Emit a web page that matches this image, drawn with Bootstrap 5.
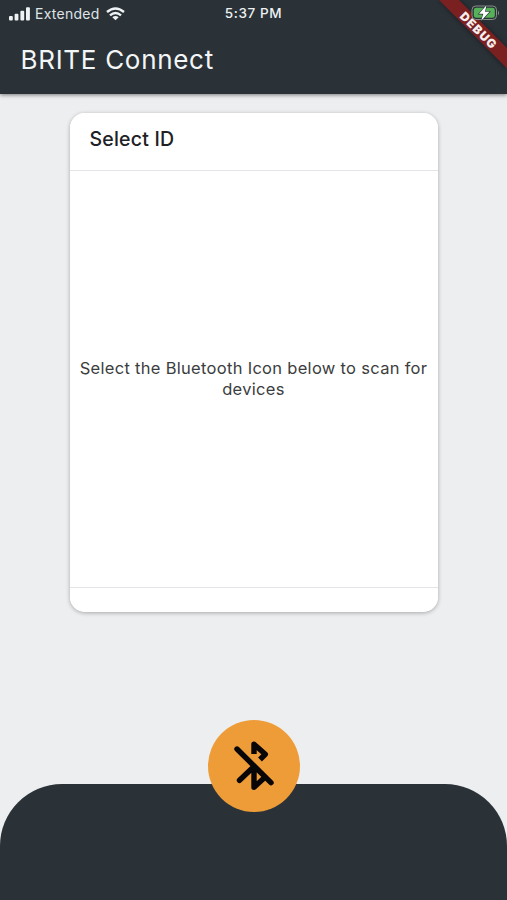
<!DOCTYPE html>
<html lang="en">
<head>
<meta charset="utf-8">
<meta name="viewport" content="width=device-width, initial-scale=1">
<title>BRITE Connect</title>
<link rel="stylesheet" href="https://cdn.jsdelivr.net/npm/bootstrap@5.3.0/dist/css/bootstrap.min.css">
<style>
body{font-family:Inter,"Liberation Sans",sans-serif;background:#eceef0;height:900px}
svg{display:block}
.app-header{height:94px;background:#2a3238;box-shadow:0 1px 4px rgba(0,0,0,.5)}
.status-bar{height:27px;padding:0 9px;color:#dfe4e6;font-size:14px;line-height:27px}
.clock{color:#eef1f2;font-size:13.5px;font-weight:500;letter-spacing:.6px}
.carrier{letter-spacing:.25px;margin:0 6px 0 4px}
.status-side{flex:1 1 0}
.app-title{color:#f3f6f7;font-size:26px;line-height:32px;letter-spacing:.7px;margin:17px 0 0 20.5px;padding:0}
.ribbon{width:80px;height:94px}
.device-card{width:368px;height:499px;margin:19px auto 0;border-radius:15px;box-shadow:0 1px 4px rgba(0,0,0,.3)}
.device-card .card-header{height:58px;padding:0 20px;border-color:#e4e5e8;font-size:19.5px;font-weight:500;color:#202124;line-height:53px;letter-spacing:.2px}
.device-card .card-footer{height:25px;border-color:#e4e5e8;padding:0}
.hint{font-size:16.5px;line-height:21px;color:#3c3d40;letter-spacing:.3px}
.bottom-panel{height:116px;background:#2a3238;border-radius:62px 62px 0 0}
.scan-btn{width:92px;height:92px;background:#ed9c38;margin-top:-64px}
.scan-btn:hover{background:#e39431}
</style>
<script src="https://cdn.jsdelivr.net/npm/bootstrap@5.3.0/dist/js/bootstrap.bundle.min.js"></script>
</head>
<body class="d-flex flex-column overflow-hidden position-relative">
<header class="app-header flex-shrink-0">
  <div class="status-bar d-flex align-items-center">
    <div class="status-side d-flex align-items-center">
      <svg width="22" height="14" viewBox="0 0 22 14" fill="#f0f3f4"><rect x="0" y="9" width="3.8" height="4.5" rx="1"/><rect x="5.6" y="6.8" width="3.8" height="6.700" rx="1"/><rect x="11.4" y="3.800" width="3.8" height="9.700" rx="1"/><rect x="17" y=".3" width="3.9" height="13.2" rx="1"/></svg>
      <span class="carrier">Extended</span>
      <svg width="19" height="14" viewBox="0 0 19 14" fill="none" stroke="#f0f3f4" stroke-width="2.4"><path d="M1 5Q9.500-2 18 5M4 8.300Q9.500 3.700 15 8.300"/><path d="M9.500 13.300 6.300 10.200Q9.500 7.800 12.700 10.200Z" fill="#f0f3f4" stroke="none"/></svg>
    </div>
    <span class="clock">5:37 PM</span>
    <div class="status-side"></div>
  </div>
  <h1 class="app-title fw-normal">BRITE Connect</h1>
</header>
<svg class="ribbon position-absolute top-0 end-0" viewBox="427 0 80 94" role="img" aria-label="Debug, battery charging">
  <defs><filter id="soft" x="-20%" y="-20%" width="140%" height="140%"><feGaussianBlur stdDeviation="2.5"/></filter></defs>
  <path d="M438 0H460L507 47V70Z" fill="#000" opacity=".35" filter="url(#soft)"/>
  <path d="M439 0H459L507 48V68.500Z" fill="#7b2020"/>
  <text transform="translate(478.200 30.200) rotate(45)" text-anchor="middle" y="4.200" font-family="Inter,sans-serif" font-size="12" font-weight="900" fill="#f7eeee" textLength="46">DEBUG</text>
  <rect x="472" y="6" width="24.500" height="13.500" rx="3.800" fill="#283237" stroke="#889089" stroke-width="1"/>
  <rect x="473.800" y="7.800" width="21" height="10" rx="2.400" fill="#56b158"/>
  <path d="M498 10.500Q500 13 498 15.500Z" fill="#889089"/>
  <path d="M486.500 5.300 479 13.800H483.300L481.200 20.800 489.500 11.800H485Z" fill="#fff" stroke="#283237" stroke-width="1.200" paint-order="stroke"/>
</svg>
<main class="flex-grow-1">
  <section class="card device-card border-0 overflow-hidden">
    <div class="card-header bg-white">Select ID</div>
    <div class="card-body d-flex align-items-center justify-content-center p-0">
      <p class="hint text-center mb-0">Select the Bluetooth Icon below to scan for<br>devices</p>
    </div>
    <div class="card-footer bg-white"></div>
  </section>
</main>
<footer class="bottom-panel flex-shrink-0 d-flex justify-content-center">
  <button class="btn scan-btn rounded-circle border-0 p-0" type="button" aria-label="Scan for Bluetooth devices">
    <svg width="92" height="92" viewBox="208 720 92 92" fill="none" stroke="#080606" stroke-width="5.400" stroke-linejoin="round" stroke-linecap="round">
      <path d="M237 749 271 782.700M239.500 780.300 254 766.500V787.300L263 779"/>
      <path d="M254 754V744.200L265.300 754.300 260 759.500" stroke-linecap="butt"/>
    </svg>
  </button>
</footer>
</body>
</html>
